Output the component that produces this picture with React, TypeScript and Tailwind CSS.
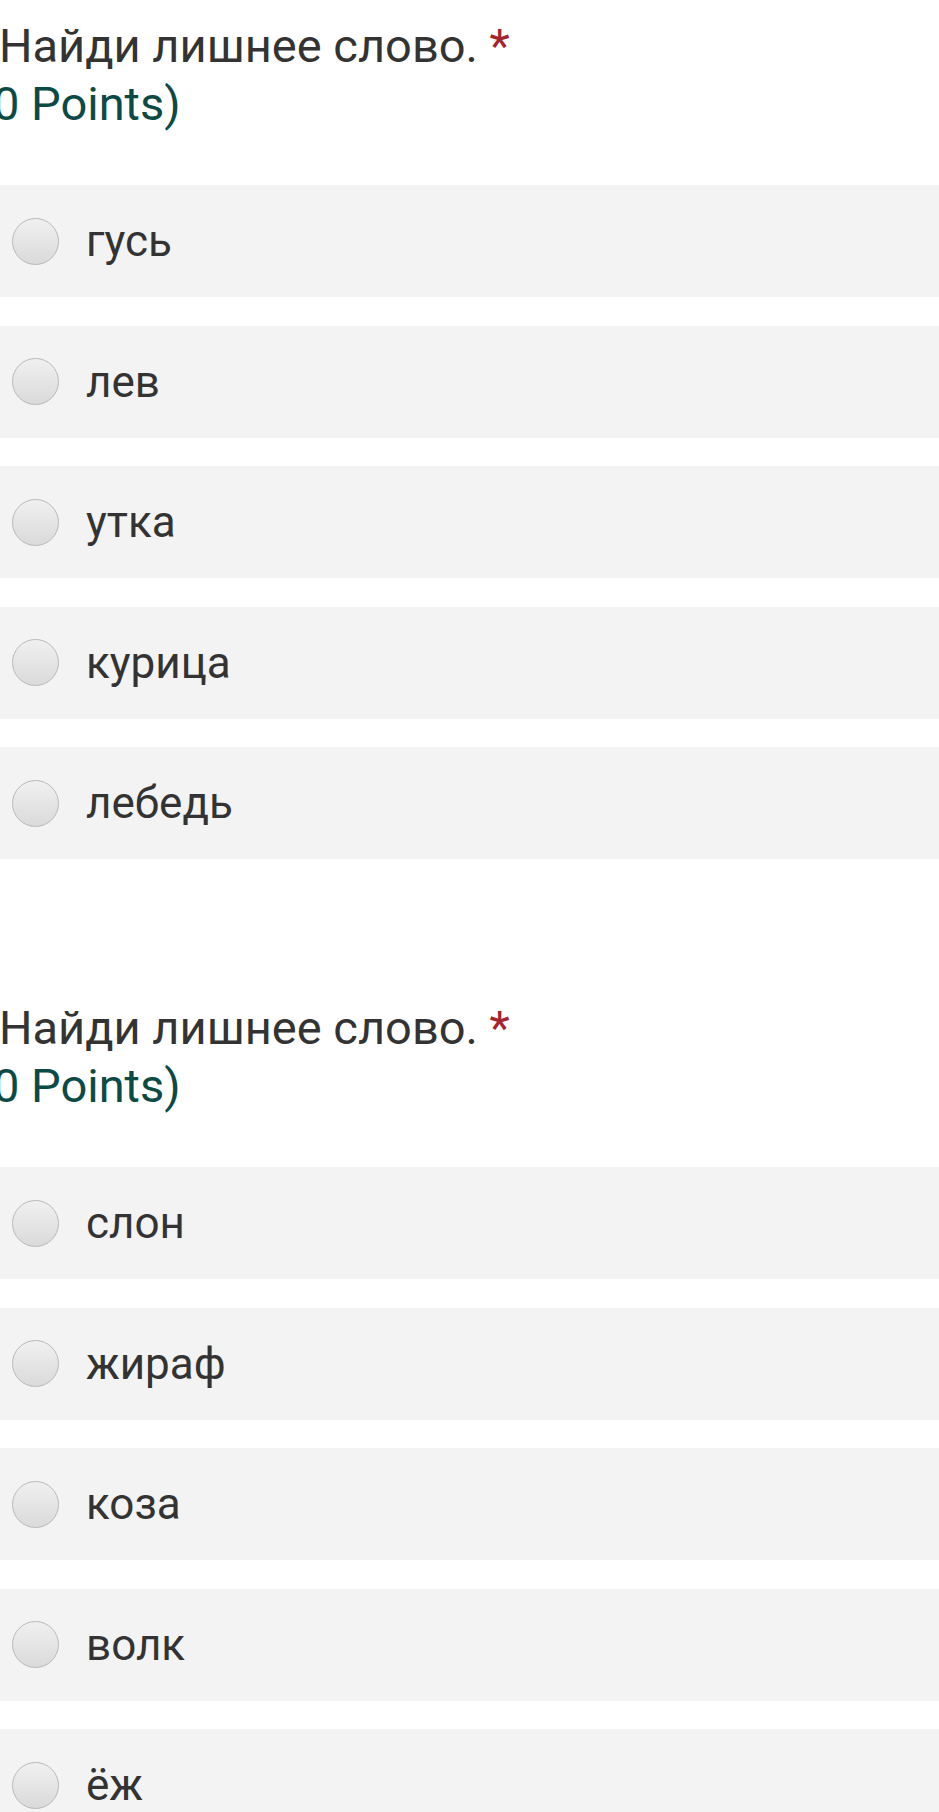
const sections = [
  ["гусь", "лев", "утка", "курица", "лебедь"],
  ["слон", "жираф", "коза", "волк", "ёж"],
];

function Radio() {
  return (
    <div className="w-[47px] h-[47px] rounded-full border border-[#b9b9b9] bg-gradient-to-b from-[#f0f0f0] to-[#dadada] shrink-0" />
  );
}

function Question({ options }: { options: string[] }) {
  return (
    <div>
      <div className="pt-[17px] text-[47px] leading-[58px]">
        <p className="text-[#333333] -ml-[1px]">
          Найди лишнее слово. <span className="text-[#a4262c]">*</span>
        </p>
        <p className="text-[#0c4a46] -ml-[7px]">0 Points)</p>
      </div>
      <div className="mt-[52px] flex flex-col gap-[28.5px]">
        {options.map((o) => (
          <div key={o} className="h-[112px] bg-[#f3f3f3] flex items-center pl-[12px]">
            <Radio />
            <span className="ml-[27px] text-[44px] text-[#333333]">{o}</span>
          </div>
        ))}
      </div>
    </div>
  );
}

export default function App() {
  return (
    <main className="min-h-screen bg-white overflow-hidden font-['Roboto',sans-serif]">
      <Question options={sections[0]} />
      <div className="h-[123px]" />
      <Question options={sections[1]} />
    </main>
  );
}
